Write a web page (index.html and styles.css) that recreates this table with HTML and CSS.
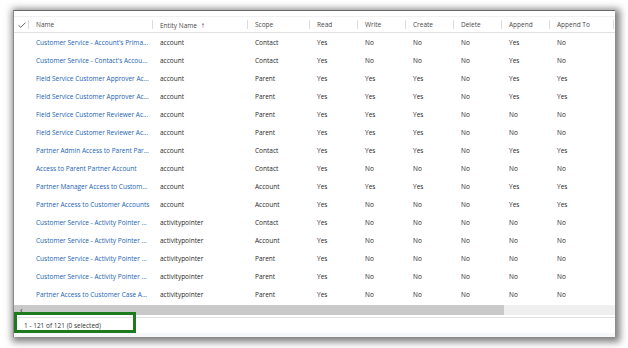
FILE: index.html
```html
<!DOCTYPE html>
<html lang="en">
<head>
    <meta charset="UTF-8">
    <title>Column Permission Profiles</title>
    <link rel="stylesheet" href="styles.css">
</head>
<body>
    <div class="window">
        <table class="grid">
            <colgroup>
                <col class="c-check"><col class="c-name"><col class="c-entity"><col class="c-scope">
                <col class="c-flag"><col class="c-flag"><col class="c-flag"><col class="c-flag">
                <col class="c-flag"><col class="c-appendto"><col>
            </colgroup>
            <thead>
                <tr>
                    <th class="check">
                        <svg width="8" height="6" viewBox="0 0 8 6"><path d="M0.5 3.2 L2.8 5.3 L7.5 0.6" fill="none" stroke="#555" stroke-width="0.9"/></svg>
                    </th>
                    <th>Name</th>
                    <th>Entity Name <span class="sort">&#8593;</span></th>
                    <th>Scope</th>
                    <th>Read</th>
                    <th>Write</th>
                    <th>Create</th>
                    <th>Delete</th>
                    <th>Append</th>
                    <th>Append To</th>
                    <th class="last"></th>
                </tr>
            </thead>
            <tbody id="rows"></tbody>
        </table>

        <div class="hscroll">
            <span class="arrow">&#8249;</span>
            <div class="thumb"></div>
        </div>

        <div class="footer">
            <span class="count">1 - 121 of 121 (0 selected)</span>
            <div class="highlight"></div>
        </div>
        <div class="footer-strip"></div>
    </div>

    <script>
        const data = [
            ["Customer Service - Account's Prima...", "account", "Contact", "YNNNYN"],
            ["Customer Service - Contact's Accou...", "account", "Contact", "YNNNYN"],
            ["Field Service Customer Approver Ac...", "account", "Parent", "YYYNYY"],
            ["Field Service Customer Approver Ac...", "account", "Parent", "YYYNYY"],
            ["Field Service Customer Reviewer Ac...", "account", "Parent", "YYYNNN"],
            ["Field Service Customer Reviewer Ac...", "account", "Parent", "YYYNNN"],
            ["Partner Admin Access to Parent Par...", "account", "Contact", "YYYNYY"],
            ["Access to Parent Partner Account", "account", "Contact", "YNNNNN"],
            ["Partner Manager Access to Custom...", "account", "Account", "YYYNYY"],
            ["Partner Access to Customer Accounts", "account", "Account", "YNNNYY"],
            ["Customer Service - Activity Pointer ...", "activitypointer", "Contact", "YNNNNN"],
            ["Customer Service - Activity Pointer ...", "activitypointer", "Account", "YNNNNN"],
            ["Customer Service - Activity Pointer ...", "activitypointer", "Parent", "YNNNNN"],
            ["Customer Service - Activity Pointer ...", "activitypointer", "Parent", "YNNNNN"],
            ["Partner Access to Customer Case A...", "activitypointer", "Parent", "YNNNNN"]
        ];

        const tbody = document.getElementById('rows');
        data.forEach(function(r) {
            const tr = document.createElement('tr');
            let html = '<td></td>';
            html += '<td class="name">' + r[0] + '</td>';
            html += '<td>' + r[1] + '</td>';
            html += '<td>' + r[2] + '</td>';
            r[3].split('').forEach(function(f) {
                html += '<td>' + (f === 'Y' ? 'Yes' : 'No') + '</td>';
            });
            html += '<td></td>';
            tr.innerHTML = html;
            tbody.appendChild(tr);
        });
    </script>
</body>
</html>
```

FILE: styles.css
```css
body {
    margin: 0;
    background-color: #ffffff;
    font-family: "Open Sans", "Noto Sans", sans-serif;
    width: 628px;
    height: 348px;
    overflow: hidden;
}

.window {
    position: relative;
    margin: 10px 13px 0 13px;
    height: 327px;
    background-color: #ffffff;
    border-top: 1px solid #6a6a6a;
    border-left: 1px solid #8a8a8a;
    box-shadow: 2px 2px 7px 3px rgba(0, 0, 0, 0.5);
    box-sizing: border-box;
    padding-top: 5px;
    display: flex;
    flex-direction: column;
}

.grid {
    border-collapse: collapse;
    table-layout: fixed;
    width: 601px;
    font-size: 6.5px;
    color: #1f1f1f;
}

.c-check { width: 15px; }
.c-name { width: 124px; }
.c-entity { width: 95px; }
.c-scope { width: 62px; }
.c-flag { width: 48px; }
.c-appendto { width: 64px; }

.grid th {
    height: 15px;
    padding: 0 0 0 7px;
    text-align: left;
    font-weight: normal;
    color: #4a4a4a;
    border-top: 1px solid #f0f0f0;
    border-bottom: 1px solid #e1e1e1;
    position: relative;
    white-space: nowrap;
}

.grid th::after {
    content: "";
    position: absolute;
    right: 0;
    top: 3px;
    bottom: 3px;
    border-right: 1px solid #dcdcdc;
}

.grid th.last::after {
    display: none;
}

.grid th.check {
    padding: 0 0 0 4px;
}

.grid th.check svg {
    display: block;
}

.sort {
    font-size: 8px;
    margin-left: 2px;
    color: #444;
}

.grid td {
    height: 18px;
    padding: 0 0 0 7px;
    white-space: nowrap;
    overflow: hidden;
}

.grid td.name {
    color: #1a5fb4;
}

.hscroll {
    margin-top: 2px;
    height: 10px;
    background-color: #efefef;
    position: relative;
    display: flex;
    align-items: center;
}

.hscroll .thumb {
    width: 490px;
    height: 10px;
    background-color: #c9c9c9;
}

.hscroll .arrow {
    position: absolute;
    left: 6px;
    top: -2px;
    font-size: 9px;
    color: #444;
}

.footer {
    position: relative;
    margin-top: 2px;
    border-top: 1px solid #e0e0e0;
    height: 15px;
    display: flex;
    align-items: center;
    padding-left: 10px;
    font-size: 6.5px;
    color: #333;
}

.highlight {
    position: absolute;
    left: 0;
    top: -6px;
    width: 122px;
    height: 21px;
    border: 3px solid #1d7a1d;
    box-sizing: border-box;
}

.footer-strip {
    flex: 1;
    background-color: #f6f7f9;
}
```
